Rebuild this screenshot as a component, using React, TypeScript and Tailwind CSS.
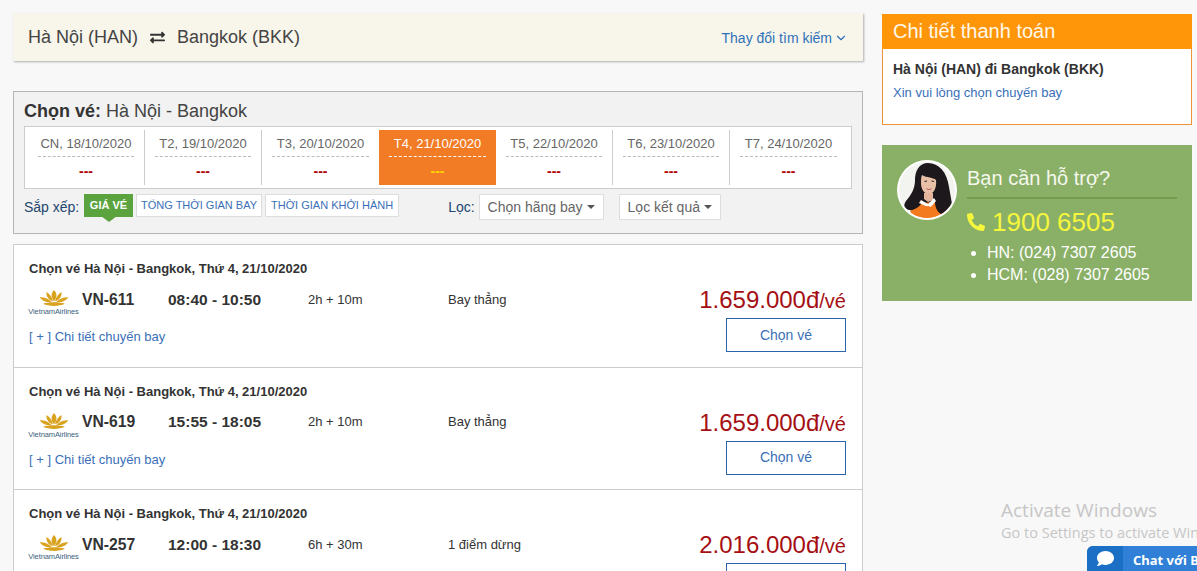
import { ChevronDown } from 'lucide-react';
import { FaComment, FaExchangeAlt, FaPhoneAlt } from 'react-icons/fa';

const dates = [
  'CN, 18/10/2020',
  'T2, 19/10/2020',
  'T3, 20/10/2020',
  'T4, 21/10/2020',
  'T5, 22/10/2020',
  'T6, 23/10/2020',
  'T7, 24/10/2020',
];

const flights = [
  { code: 'VN-611', time: '08:40 - 10:50', duration: '2h + 10m', stops: 'Bay thẳng', price: '1.659.000' },
  { code: 'VN-619', time: '15:55 - 18:05', duration: '2h + 10m', stops: 'Bay thẳng', price: '1.659.000' },
  { code: 'VN-257', time: '12:00 - 18:30', duration: '6h + 30m', stops: '1 điểm dừng', price: '2.016.000' },
];

function Caret() {
  return <span className="ml-1 inline-block border-x-[4px] border-t-[4px] border-x-transparent border-t-[#555] align-middle" />;
}

function VietnamLogo() {
  return (
    <div className="flex w-[49px] shrink-0 flex-col items-center pt-[7px]">
      <svg width="30" height="17" viewBox="0 0 30 21" preserveAspectRatio="none">
        <g fill="#d9a320">
          <path d="M15 0 C18 4 18.5 9 15 14 C11.5 9 12 4 15 0Z" />
          <path d="M7.5 2.5 C11 5 13 9 14 14 C9.5 12.5 7 8 7.5 2.5Z" />
          <path d="M22.5 2.5 C19 5 17 9 16 14 C20.5 12.5 23 8 22.5 2.5Z" />
          <path d="M0.5 9 C5 8.5 10 11 13 15 C8 16 3 13.5 0.5 9Z" />
          <path d="M29.5 9 C25 8.5 20 11 17 15 C22 16 27 13.5 29.5 9Z" />
          <path d="M4 17 C10 14.5 20 14.5 26 17 C20 20.5 10 20.5 4 17Z" />
        </g>
      </svg>
      <span className="mt-[1px] text-[7.5px] leading-[8px] tracking-[-0.1px] whitespace-nowrap text-[#3b5f7d]">VietnamAirlines</span>
    </div>
  );
}

function Avatar() {
  return (
    <svg width="60" height="60" viewBox="0 0 60 60" className="shrink-0">
      <defs>
        <clipPath id="avatar-clip">
          <circle cx="30" cy="30" r="28" />
        </clipPath>
      </defs>
      <circle cx="30" cy="30" r="30" fill="#fff" />
      <g clipPath="url(#avatar-clip)">
        <rect width="60" height="60" fill="#f3f4f0" />
        <path d="M12 60 L14 49 L24 42 L40 42 L50 50 L52 60Z" fill="#f47a20" />
        <path d="M31 3 C22 3 18 11 18 20 C18 29 14 35 9 41 C6 45 7 49 12 50 C17 51 22 47 25 43 L38 42 C38 48 41 54 47 55 C52 56 56 50 55 44 C54 38 53 33 52 27 C50 12 42 3 31 3Z" fill="#1d181b" />
        <path d="M25 15 C30 18 36 17 39 20 C40 27 37 34 32 34 C27 34 24 29 24 23 C24 20 24 17 25 15Z" fill="#e8c0a8" />
        <path d="M27.5 21.5 L30 21 M34.5 21 L37 21.5" stroke="#2a1f1f" strokeWidth="1" />
        <path d="M29 28 C31 29.5 33 29.5 35 28 C34 30.5 30 30.5 29 28Z" fill="#b5404a" />
        <path d="M27 33 L36 33 L36 40 L31 42 L27 39Z" fill="#e3b59b" />
        <path d="M24 40 L31 44 L37 38 L39 41 L33 48 L22 43Z" fill="#fff" />
        <path d="M18 49 L31 46 L38 48 L40 60 L14 60Z" fill="#f47a20" />
      </g>
    </svg>
  );
}

function FlightRow({ flight }: { flight: (typeof flights)[number] }) {
  return (
    <div className="h-[122.5px] border-b border-[#ccc] pt-[15px] pr-[16px] pl-[15px]">
      <div className="text-[13px] leading-[17px] font-bold text-[#333]">
        Chọn vé Hà Nội - Bangkok, Thứ 4, 21/10/2020
      </div>
      <div className="flex">
        <div className="flex-1">
          <div className="mt-[7px] flex h-[31px] items-center text-[#333]">
            <VietnamLogo />
            <div className="ml-[4px] w-[86px] text-[15.7px] font-bold">{flight.code}</div>
            <div className="w-[140px] text-[15.5px] font-bold">{flight.time}</div>
            <div className="w-[140px] text-[13px]">{flight.duration}</div>
            <div className="text-[13px]">{flight.stops}</div>
          </div>
          <div className="mt-[13px] text-[13px] leading-[17px] text-[#3a6fb8]">[ + ] Chi tiết chuyến bay</div>
        </div>
        <div className="flex flex-col items-end pt-[9px]">
          <div className="h-[28px] leading-[28px] whitespace-nowrap text-[#a50f14]">
            <span className="text-[24px]">{flight.price}đ</span>
            <span className="text-[20px]">/vé</span>
          </div>
          <button className="mt-[4px] h-[34px] w-[120px] border border-[#2b63ad] bg-white text-[14px] text-[#3a6fb8]">
            Chọn vé
          </button>
        </div>
      </div>
    </div>
  );
}

export default function App() {
  return (
    <div className="relative flex h-[571px] w-[1197px] gap-[19px] overflow-hidden bg-[#f8f8f8] pt-[13px] pl-[13px] font-['Liberation_Sans',sans-serif] text-[#333]">
      {/* Left column */}
      <div className="w-[850px] shrink-0">
        <div className="flex h-[48px] items-center justify-between bg-[#f8f5eb] px-[15px] shadow-[1px_1px_2px_rgba(0,0,0,0.3)]">
          <div className="flex items-center text-[18px] text-[#444]">
            <span>Hà Nội (HAN)</span>
            <FaExchangeAlt className="mx-[12px] text-[15px] text-[#333]" />
            <span>Bangkok (BKK)</span>
          </div>
          <div className="flex items-center pt-[2px] text-[14px] text-[#2f72b8]">
            Thay đổi tìm kiếm
            <ChevronDown size={14} strokeWidth={2} className="ml-[2px]" />
          </div>
        </div>

        {/* Date picker panel */}
        <div className="mt-[30px] h-[143px] border border-[#b5b5b5] bg-[#f2f2f2] px-[10px]">
          <div className="pt-[8px] text-[18px] leading-[22px] text-[#444]">
            <b className="text-[#333]">Chọn vé:</b> Hà Nội - Bangkok
          </div>
          <div className="mt-[4px] flex h-[63px] border border-[#ccc] bg-white p-[3px]">
            {dates.map((d, i) => {
              const active = i === 3;
              return (
                <div
                  key={d}
                  className={`w-[117px] px-[10px] pt-[6px] text-center ${active ? 'bg-[#f27b26] text-[#fff]' : 'text-[#666]'} ${i < 6 && i !== 2 && !active ? 'border-r border-[#ccc]' : ''}`}
                >
                  <div className={`h-[21px] whitespace-nowrap border-b border-dashed text-[13px] leading-[16px] ${active ? 'border-white' : 'border-[#bbb]'}`}>
                    {d}
                  </div>
                  <div className={`mt-[5px] text-[14px] leading-[18px] font-bold ${active ? 'text-[#ffd800]' : 'text-[#b00000]'}`}>---</div>
                </div>
              );
            })}
          </div>
          <div className="mt-[5px] flex items-start text-[14px]">
            <span className="w-[60px] pt-[5px] leading-[17px] text-[#23466e]">Sắp xếp:</span>
            <div className="relative flex h-[23px] w-[49px] items-center justify-center bg-[#5ba33f] text-[11px] font-bold text-white">
              GIÁ VÉ
              <span className="absolute top-[22px] left-[17px] border-x-[8px] border-t-[6px] border-x-transparent border-t-[#5ba33f]" />
            </div>
            <div className="ml-[3px] flex h-[23px] items-center border border-[#ddd] bg-white px-[4px] text-[11px] text-[#3a6fb8]">TỔNG THỜI GIAN BAY</div>
            <div className="ml-[3px] flex h-[23px] items-center border border-[#ddd] bg-white px-[5px] text-[11px] text-[#3a6fb8]">THỜI GIAN KHỞI HÀNH</div>
            <span className="ml-[49px] pt-[5px] leading-[17px] text-[#23466e]">Lọc:</span>
            <div className="ml-[4px] flex h-[26px] items-center border border-[#ddd] bg-white px-[8px] text-[#666]">
              Chọn hãng bay
              <Caret />
            </div>
            <div className="ml-[15px] flex h-[26px] items-center border border-[#ddd] bg-white px-[8px] text-[#666]">
              Lọc kết quả
              <Caret />
            </div>
          </div>
        </div>

        {/* Flights */}
        <div className="mt-[10px] border-x border-t border-[#ccc] bg-white">
          {flights.map((f) => (
            <FlightRow key={f.code} flight={f} />
          ))}
        </div>
      </div>

      {/* Right column */}
      <div className="w-[310px] shrink-0 pt-[1px]">
        <div className="h-[111px] border border-[#f0923a] bg-white">
          <div className="-mx-px -mt-px h-[35px] bg-[#ff9509] px-[11px] text-[20px] leading-[35px] text-[#fff8ea]">Chi tiết thanh toán</div>
          <div className="px-[10px] pt-[12px]">
            <div className="text-[14px] leading-[17px] font-bold">Hà Nội (HAN) đi Bangkok (BKK)</div>
            <div className="mt-[6px] text-[13px] leading-[17px] text-[#3a6fb8]">Xin vui lòng chọn chuyến bay</div>
          </div>
        </div>

        <div className="mt-[20px] flex h-[156px] bg-[#8ab068] pt-[15px] pl-[15px] text-white">
          <Avatar />
          <div className="ml-[10px] w-[210px]">
            <div className="h-[39px] border-b-2 border-[#739c4e] pt-[6px] text-[20px] leading-[24px] text-[#f6f8ee]">Bạn cần hỗ trợ?</div>
            <div className="mt-[7px] flex items-center text-[26px] leading-[32px] text-[#f6f63c]">
              <FaPhoneAlt className="mr-[7px] text-[18px]" />
              1900 6505
            </div>
            <ul className="mt-[4px] list-disc pl-[20px] text-[16px] leading-[22px]">
              <li>HN: (024) 7307 2605</li>
              <li>HCM: (028) 7307 2605</li>
            </ul>
          </div>
        </div>
      </div>

      {/* Windows watermark */}
      <div className="absolute top-[498px] left-[1001px] w-[260px] font-['Open_Sans',sans-serif] whitespace-nowrap text-[#c6c6c6]">
        <div className="text-[19px] leading-[24px]">Activate Windows</div>
        <div className="text-[14.5px] leading-[21px]">Go to Settings to activate Windows.</div>
      </div>

      {/* Chat tab */}
      <div className="absolute top-[546px] left-[1087px] flex h-[25px] w-[240px] overflow-hidden rounded-tl-[6px] bg-[#2f80d6] font-['Noto_Sans',sans-serif] text-[13px] font-bold text-white">
        <div className="flex w-[36px] items-center justify-center bg-[#1b6fc4]">
          <FaComment className="text-[17px]" />
        </div>
        <div className="pl-[10px] leading-[28px] whitespace-nowrap">Chat với Bộ phận hỗ trợ</div>
      </div>
    </div>
  );
}
